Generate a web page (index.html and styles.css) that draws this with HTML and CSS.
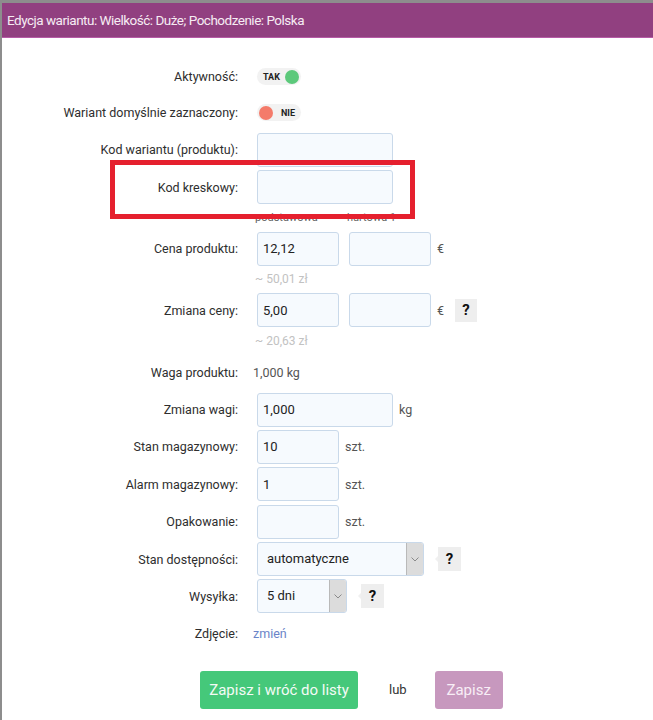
FILE: index.html
```html
<!DOCTYPE html>
<html lang="pl">
<head>
    <meta charset="UTF-8">
    <meta name="viewport" content="width=device-width, initial-scale=1.0">
    <title>Edycja wariantu</title>
    <link rel="stylesheet" href="styles.css">
</head>
<body>
    <div class="modal">
        <div class="modal-header">Edycja wariantu: Wielkość: Duże; Pochodzenie: Polska</div>

        <form class="modal-body">
            <div class="row row-toggle">
                <label class="row-label">Aktywność:</label>
                <div class="row-field">
                    <span class="toggle toggle-on"><span class="toggle-text">TAK</span><span class="toggle-dot"></span></span>
                </div>
            </div>
            <div class="row row-toggle">
                <label class="row-label">Wariant domyślnie zaznaczony:</label>
                <div class="row-field">
                    <span class="toggle toggle-off"><span class="toggle-dot"></span><span class="toggle-text">NIE</span></span>
                </div>
            </div>
            <div class="row">
                <label class="row-label">Kod wariantu (produktu):</label>
                <div class="row-field"><input class="input input-md" type="text"></div>
            </div>
            <div class="row">
                <label class="row-label">Kod kreskowy:</label>
                <div class="row-field"><input class="input input-md" type="text"></div>
            </div>

            <div class="price-head">
                <span class="price-col">podstawowa</span>
                <span class="price-col">hurtowa 1</span>
            </div>
            <div class="row">
                <label class="row-label">Cena produktu:</label>
                <div class="row-field">
                    <input class="input input-sm" type="text" value="12,12">
                    <input class="input input-sm" type="text">
                    <span class="unit">€</span>
                </div>
            </div>
            <div class="hint">~ 50,01 zł</div>
            <div class="row">
                <label class="row-label">Zmiana ceny:</label>
                <div class="row-field">
                    <input class="input input-sm" type="text" value="5,00">
                    <input class="input input-sm" type="text">
                    <span class="unit">€</span>
                    <span class="help">?</span>
                </div>
            </div>
            <div class="hint">~ 20,63 zł</div>

            <div class="row">
                <label class="row-label">Waga produktu:</label>
                <div class="row-field"><span class="plain">1,000 kg</span></div>
            </div>
            <div class="row">
                <label class="row-label">Zmiana wagi:</label>
                <div class="row-field">
                    <input class="input input-md" type="text" value="1,000">
                    <span class="unit">kg</span>
                </div>
            </div>
            <div class="row">
                <label class="row-label">Stan magazynowy:</label>
                <div class="row-field">
                    <input class="input input-sm" type="text" value="10">
                    <span class="unit">szt.</span>
                </div>
            </div>
            <div class="row">
                <label class="row-label">Alarm magazynowy:</label>
                <div class="row-field">
                    <input class="input input-sm" type="text" value="1">
                    <span class="unit">szt.</span>
                </div>
            </div>
            <div class="row">
                <label class="row-label">Opakowanie:</label>
                <div class="row-field">
                    <input class="input input-sm" type="text">
                    <span class="unit">szt.</span>
                </div>
            </div>
            <div class="row">
                <label class="row-label">Stan dostępności:</label>
                <div class="row-field">
                    <div class="select select-lg">
                        <span class="select-value">automatyczne</span>
                        <span class="select-arrow"><svg width="8" height="5" viewBox="0 0 8 5"><polyline points="0.5,0.5 4,4 7.5,0.5" fill="none" stroke="#8a8a8a" stroke-width="1"/></svg></span>
                    </div>
                    <span class="help help-pointer">?</span>
                </div>
            </div>
            <div class="row">
                <label class="row-label">Wysyłka:</label>
                <div class="row-field">
                    <div class="select select-sm">
                        <span class="select-value">5 dni</span>
                        <span class="select-arrow"><svg width="8" height="5" viewBox="0 0 8 5"><polyline points="0.5,0.5 4,4 7.5,0.5" fill="none" stroke="#8a8a8a" stroke-width="1"/></svg></span>
                    </div>
                    <span class="help help-pointer">?</span>
                </div>
            </div>
            <div class="row">
                <label class="row-label">Zdjęcie:</label>
                <div class="row-field"><a class="link" href="#">zmień</a></div>
            </div>

            <div class="actions">
                <button type="button" class="btn btn-primary">Zapisz i wróć do listy</button>
                <span class="or">lub</span>
                <button type="button" class="btn btn-secondary">Zapisz</button>
            </div>
        </form>

        <div class="highlight"></div>
    </div>
</body>
</html>
```

FILE: styles.css
```css
body {
    margin: 0;
    background-color: #8d8d8d;
    font-family: Roboto, "Liberation Sans", sans-serif;
    color: #333;
}
.modal {
    position: relative;
    margin: 3px 0 0 2px;
    height: 717px;
    background-color: #fff;
    overflow: hidden;
}
.modal-header {
    height: 34px;
    line-height: 34px;
    padding-left: 5px;
    background-color: #914080;
    border-bottom: 1px solid #b65aa6;
    color: #f6ecf3;
    font-size: 13.5px;
    letter-spacing: -0.5px;
}
.modal-body {
    padding-top: 22px;
}
.row {
    display: flex;
    align-items: center;
    height: 34px;
    margin-bottom: 3.4px;
}
.row-toggle {
    height: 33px;
}
.row-label {
    flex: 0 0 236px;
    text-align: right;
    font-size: 12.5px;
    color: #2e2e2e;
}
.row-field {
    display: flex;
    align-items: center;
    padding-left: 15px;
    font-size: 12.5px;
}
.input {
    box-sizing: border-box;
    height: 34px;
    margin: 0 0 0 4px;
    padding: 0 5px;
    border: 1px solid #c9d9ea;
    border-radius: 3px;
    background-color: #f6fafe;
    font-family: inherit;
    font-size: 13px;
    color: #222;
}
.input + .input {
    margin-left: 10px;
}
.input-sm {
    width: 82px;
}
.input-md {
    width: 136px;
}
.unit {
    margin-left: 6px;
    color: #555;
    font-size: 12.5px;
}
.plain {
    color: #555;
}
.help {
    position: relative;
    display: flex;
    align-items: center;
    justify-content: center;
    width: 22px;
    height: 23px;
    margin-left: 11px;
    background-color: #eee;
    font-weight: bold;
    font-size: 15px;
    color: #111;
}
.help-pointer {
    margin-left: 14px;
    height: 24px;
    width: 23px;
}
.help-pointer::before {
    content: "";
    position: absolute;
    left: -6px;
    top: 50%;
    margin-top: -3px;
    border: 3px solid transparent;
    border-right-color: #f0f0f0;
}
.price-head {
    display: flex;
    height: 20px;
    line-height: 20px;
    margin-bottom: 4px;
    padding-left: 253px;
    font-size: 11px;
    color: #666;
}
.price-col {
    width: 92px;
}
.hint {
    height: 21px;
    line-height: 21px;
    margin-bottom: 3.4px;
    padding-left: 253px;
    font-size: 12px;
    color: #c2c2c2;
}
.toggle {
    display: inline-flex;
    align-items: center;
    box-sizing: border-box;
    width: 44px;
    height: 17px;
    margin-left: 4px;
    border-radius: 9px;
    background-color: #f2f2f2;
    font-size: 9px;
    font-weight: bold;
    color: #222;
}
.toggle-on {
    padding: 0 2px 0 6px;
    justify-content: space-between;
}
.toggle-off {
    padding: 0 6px 0 2px;
    justify-content: space-between;
}
.toggle-dot {
    width: 14px;
    height: 14px;
    border-radius: 50%;
}
.toggle-on .toggle-dot {
    background-color: #5cc97b;
}
.toggle-off .toggle-dot {
    background-color: #f47b6a;
}
.select {
    display: flex;
    box-sizing: border-box;
    height: 34px;
    margin-left: 4px;
    border: 1px solid #c9d9ea;
    border-radius: 3px;
    background-color: #f6fafe;
    overflow: hidden;
}
.select-lg {
    width: 167px;
}
.select-sm {
    width: 90px;
}
.select-value {
    flex: 1;
    padding-left: 9px;
    line-height: 32px;
    font-size: 13px;
    color: #222;
}
.select-arrow {
    display: flex;
    align-items: center;
    justify-content: center;
    width: 16px;
    background-color: #dcdcdc;
    border-left: 1px solid #b9b9b9;
}
.link {
    color: #6a84c8;
    text-decoration: none;
}
.actions {
    display: flex;
    align-items: center;
    margin-top: 20px;
    padding-left: 198px;
}
.btn {
    height: 38px;
    padding: 0;
    border: none;
    border-radius: 3px;
    font-family: inherit;
    font-size: 15px;
    color: #f4fbf6;
    cursor: pointer;
}
.btn-primary {
    width: 158px;
    background-color: #45c87a;
}
.btn-secondary {
    width: 68px;
    background-color: #c798be;
    color: #f8eef6;
}
.or {
    margin: 0 28px 0 31px;
    font-size: 13px;
    color: #333;
}
.highlight {
    position: absolute;
    left: 108px;
    top: 157px;
    width: 295px;
    height: 49px;
    border: 5px solid #e5202e;
}
```
